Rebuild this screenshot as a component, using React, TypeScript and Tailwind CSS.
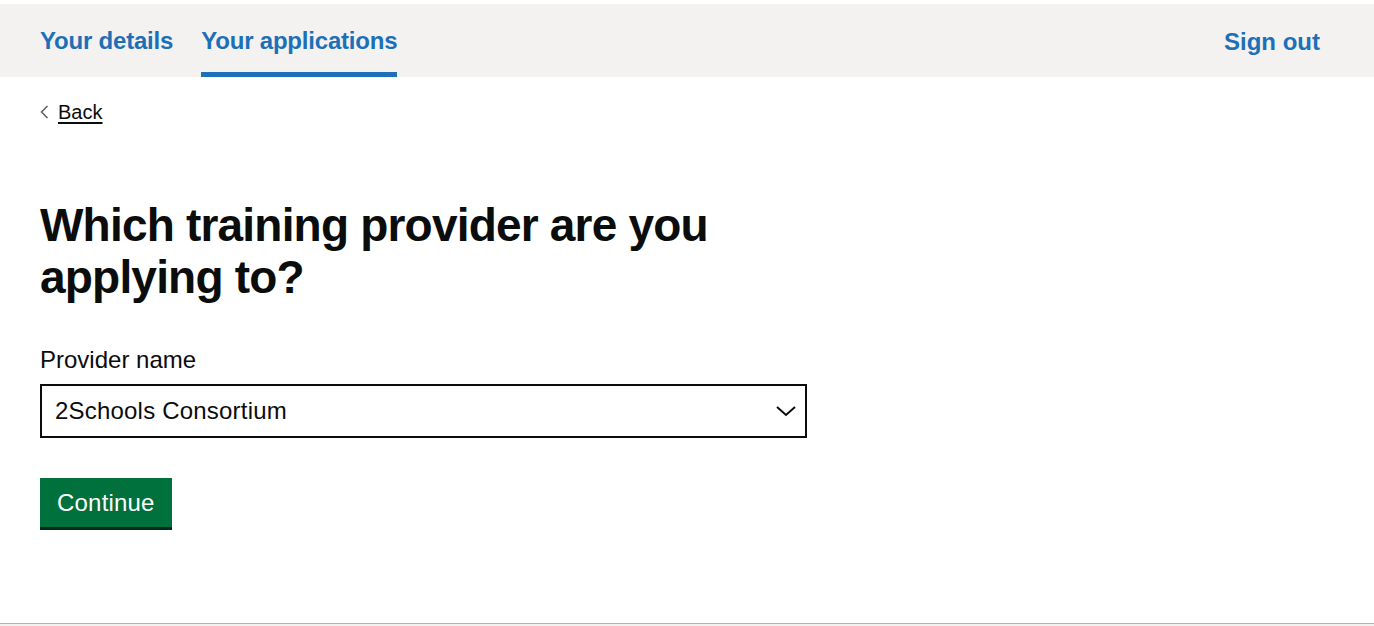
export default function App() {
  return (
    <div className="min-h-[626px] flex flex-col bg-white font-['Liberation_Sans',Arial,sans-serif] text-[#0b0c0c]">
      <div className="h-1 bg-white" />
      <header className="bg-[#f3f2f1] h-[73px] px-10 flex items-stretch justify-between">
        <nav className="flex gap-[28px]">
          <a className="flex items-center pt-[6px] text-[24px] font-bold tracking-[-0.2px] text-[#1d70b8] border-b-[5px] border-transparent">
            Your details
          </a>
          <a className="flex items-center pt-[6px] text-[24px] font-bold tracking-[-0.2px] text-[#1d70b8] border-b-[5px] border-[#1d70b8]">
            Your applications
          </a>
        </nav>
        <a className="flex items-center pt-[2px] pr-[14px] text-[24px] font-bold text-[#1d70b8]">Sign out</a>
      </header>
      <main className="flex-1 px-10">
        <a className="mt-[20px] inline-flex items-center gap-[9px] text-[20px] underline underline-offset-[3px]">
          <svg width="9" height="14" viewBox="0 0 9 14" className="text-[#505a5f]">
            <path d="M7.5 1 L1.5 7 L7.5 13" fill="none" stroke="currentColor" strokeWidth="1.4" />
          </svg>
          Back
        </a>
        <h1 className="mt-[72px] max-w-[720px] text-[46px] leading-[52px] font-bold tracking-[-0.8px]">
          Which training provider are you applying to?
        </h1>
        <label className="block mt-[43px] text-[24px] leading-[28px]">Provider name</label>
        <div className="mt-[10px] w-[767px] h-[54px] border-2 border-[#0b0c0c] flex items-center justify-between pl-[13px] pr-[8px]">
          <span className="text-[24px] tracking-[0.2px]">2Schools Consortium</span>
          <svg width="22" height="14" viewBox="0 0 22 14">
            <path d="M2 3 L11 11 L20 3" fill="none" stroke="#0b0c0c" strokeWidth="2" />
          </svg>
        </div>
        <button className="mt-[40px] h-[49px] px-[17px] bg-[#00703c] text-white text-[24px] tracking-[0.2px] shadow-[0_3px_0_#002d18]">
          Continue
        </button>
      </main>
      <div className="h-[3px] bg-[#f3f2f1] border-t border-[#b1b4b6]" />
    </div>
  );
}
